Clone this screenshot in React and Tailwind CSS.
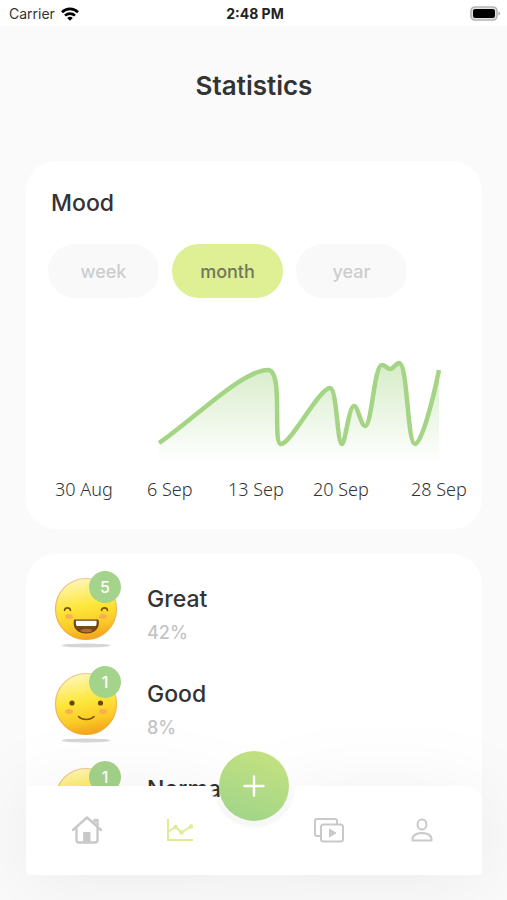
import React from "react";

const PERIODS = ["week", "month", "year"];
const DATES = ["30 Aug", "6 Sep", "13 Sep", "20 Sep", "28 Sep"];
const MOODS = [
  { name: "Great", share: "42%", count: 5, face: "great" },
  { name: "Good", share: "8%", count: 1, face: "good" },
  { name: "Normal", share: "8%", count: 1, face: "good" },
];

const CURVE =
  "M133 93C166 71 216 20 242 20C258 20 246 94 255 94C265 94 293 38 304 38C311 38 311 94 316 94C319 94 323 56 328 56C332 56 335 76 339 76C346 76 348 15 356 15C359 15 361 19 364.5 19C367 19 370 13 373 13C382 13 381 94 389 94C396 94 408 45 413 20";

function StatusBar() {
  return (
    <div className="grid h-[26px] shrink-0 grid-cols-3 items-center bg-white pt-px pr-[6px] pl-[9px] text-sm leading-none">
      <div className="flex items-center gap-[6px] text-[#333]">
        <span>Carrier</span>
        <svg viewBox="0 0 18 14" className="h-[14px] w-[18px]" fill="none" stroke="#000" strokeWidth="2.6">
          <path d="M1 5.2C5.5 .8 12.500 .8 17 5.200" />
          <path d="M4 8.600C6.800 5.900 11.200 5.900 14 8.600" />
          <path d="M9 13.800L6.200 10.900C7.800 9.500 10.200 9.500 11.800 10.900Z" fill="#000" stroke="none" />
        </svg>
      </div>
      <div className="text-center font-bold whitespace-nowrap text-[#222]">2:48 PM</div>
      <svg viewBox="0 0 31 15" className="h-[15px] w-[31px] justify-self-end">
        <rect x="1" y="1" width="26" height="13" rx="4" fill="#e4e4e4" stroke="#b4b4b4" strokeWidth="1.600" />
        <rect x="3" y="3" width="22" height="9" rx="2" fill="#000" />
        <path d="M28.500 5.500C30.500 6 30.500 9 28.500 9.500Z" fill="#aaa" />
      </svg>
    </div>
  );
}

function MoodChart() {
  return (
    <svg viewBox="0 0 456 120" className="block w-full" role="img" aria-label="Mood over the month">
      <defs>
        <linearGradient id="area" x1="0" y1="0" x2="0" y2="1">
          <stop offset="0" stopColor="#a4d585" stopOpacity="0.45" />
          <stop offset="1" stopColor="#a4d585" stopOpacity="0" />
        </linearGradient>
      </defs>
      <path d={CURVE + "V112H133Z"} fill="url(#area)" />
      <path d={CURVE} fill="none" stroke="#a4d585" strokeWidth="4.500" strokeLinejoin="round" />
    </svg>
  );
}

function Face({ kind }) {
  return (
    <svg viewBox="0 0 64 72" className="block h-[72px] w-16" aria-hidden="true">
      <defs>
        <linearGradient id="skin" x1="0.400" y1="0" x2="0.600" y2="1">
          <stop offset="0" stopColor="#fff6b8" />
          <stop offset="0.450" stopColor="#fde73a" />
          <stop offset="0.750" stopColor="#fbcb27" />
          <stop offset="1" stopColor="#f3a01c" />
        </linearGradient>
        <linearGradient id="rim" x1="0" y1="0" x2="0" y2="1">
          <stop offset="0" stopColor="#f0c68c" />
          <stop offset="1" stopColor="#f2a72a" />
        </linearGradient>
      </defs>
      <ellipse cx="32" cy="68.500" rx="24.500" ry="2" fill="#d6d6d6" />
      <circle cx="32" cy="32" r="30.500" fill="url(#skin)" stroke="url(#rim)" strokeWidth="1.200" />
      <ellipse cx="15" cy="39.500" rx="4" ry="2.500" fill="#f9a55a" opacity="0.800" />
      <ellipse cx="49" cy="39.500" rx="4" ry="2.500" fill="#f9a55a" opacity="0.800" />
      {kind === "great" ? (
        <>
          <path d="M10.500 33.500C11 30 16 30 16.500 33.500M47.500 33.500C48 30 53 30 53.500 33.500" fill="none" stroke="#7a5208" strokeWidth="1.600" strokeLinecap="round" />
          <path d="M20.500 43H44C45.500 51.500 40 56 32.200 56C24.500 56 19 51.500 20.500 43Z" fill="#7b4a12" stroke="#6d400c" strokeWidth="1.200" strokeLinejoin="round" />
          <path d="M22 43.800H42.500C42.800 46.800 42.500 48.600 41.500 49H23C22 48.500 21.700 47 22 43.800Z" fill="#fff" />
          <path d="M26 54C29 51 36 51 39 54C35 55.800 30 55.800 26 54Z" fill="#b5702a" />
        </>
      ) : (
        <>
          <circle cx="18" cy="31" r="2.600" fill="#6d450b" />
          <circle cx="46.500" cy="31" r="2.600" fill="#6d450b" />
          <path d="M24.500 44.500C28.500 48.500 36 48.500 40 44.500" fill="none" stroke="#7a5208" strokeWidth="1.600" strokeLinecap="round" />
        </>
      )}
    </svg>
  );
}

function MoodRow({ mood }) {
  return (
    <li className="flex h-[95px] items-start gap-[29px] pl-[28px]">
      <div className="relative pt-[6px]">
        <Face kind={mood.face} />
        <span className="absolute top-0 -right-[3px] flex size-8 items-center justify-center rounded-full bg-[#a4d38b] text-base font-medium text-white">
          {mood.count}
        </span>
      </div>
      <div className="pt-[10px]">
        <div className="text-[23px] leading-9 font-medium text-[#333]">{mood.name}</div>
        <div className="text-lg leading-8 font-medium text-[#c4c4c4]">{mood.share}</div>
      </div>
    </li>
  );
}

function NavBar() {
  return (
    <nav className="absolute right-[25px] bottom-[25px] left-[26px] h-[89px]">
      <div className="absolute inset-0 drop-shadow-[0_4px_36px_rgba(0,0,0,0.06)]">
        <div className="size-full rounded-sm rounded-tr-2xl bg-white [mask-image:radial-gradient(circle_at_50%_0,transparent_40px,black_43px)]" />
      </div>
      <div className="relative grid h-full grid-cols-[1fr_1fr_56px_1fr_1fr] px-[14px] text-[#c9c9c9]">
        <button aria-label="Home" className="flex items-center justify-center">
          <svg viewBox="0 0 32 30" className="h-[30px] w-8" fill="none" stroke="currentColor" strokeWidth="2.400" strokeLinecap="round" strokeLinejoin="round">
            <path d="M2 14L16 1.500L30 14" />
            <path d="M23.500 7V4H26.500V10" />
            <path d="M5.500 12.500V24Q5.500 26.500 8 26.500H24Q26.500 26.500 26.500 24V12.500" />
            <path d="M13 16.500H19V26H13Z" fill="currentColor" strokeWidth="1" />
          </svg>
        </button>
        <button aria-label="Statistics" aria-current="page" className="flex items-center justify-center text-[#dcee8f]">
          <svg viewBox="0 0 28 26" className="h-[26px] w-7" fill="none" stroke="currentColor" strokeWidth="2">
            <path d="M2 1V22H27" />
            <path d="M2 14L9.500 9L15.500 14.500L25 8.500" />
            <circle cx="9.500" cy="9" r="1.200" fill="currentColor" />
            <circle cx="15.500" cy="14.500" r="1.200" fill="currentColor" />
            <circle cx="25" cy="8.500" r="1.200" fill="currentColor" />
          </svg>
        </button>
        <span />
        <button aria-label="Videos" className="flex items-center justify-center">
          <svg viewBox="0 0 32 26" className="h-[26px] w-8" fill="none" stroke="currentColor" strokeWidth="2" strokeLinejoin="round">
            <path d="M7 18H4Q2 18 2 16V3Q2 1 4 1H22Q24 1 24 3V6" />
            <rect x="8" y="6.500" width="22" height="17" rx="2.500" />
            <path d="M16.500 11L23 15L16.500 19Z" fill="currentColor" strokeWidth="1" />
          </svg>
        </button>
        <button aria-label="Profile" className="flex items-center justify-center">
          <svg viewBox="0 0 24 26" className="h-[26px] w-6" fill="none" stroke="currentColor" strokeWidth="2" strokeLinejoin="round">
            <ellipse cx="12" cy="6.500" rx="4.500" ry="5" />
            <path d="M2.500 22.500C2 17.500 6 15 12 15C18 15 22 17.500 21.500 22.500Z" />
          </svg>
        </button>
      </div>
      <button
        aria-label="Add mood"
        className="absolute -top-[35px] left-1/2 flex size-[70px] -translate-x-1/2 items-center justify-center rounded-full bg-linear-200 from-[#c8e27f] to-[#9dd489]"
      >
        <svg viewBox="0 0 22 22" className="size-[22px]" stroke="#fff" strokeWidth="2.400" strokeLinecap="round">
          <path d="M11 1.500V20.500M1.500 11H20.500" />
        </svg>
      </button>
    </nav>
  );
}

export default function App() {
  return (
    <div className="relative flex h-screen flex-col overflow-hidden bg-[#fafafa] font-['Inter','Liberation_Sans',sans-serif]">
      <StatusBar />
      <main className="mb-[25px] min-h-0 flex-1 overflow-hidden pr-[25px] pl-[26px]">
        <h1 className="pt-11 pb-[59px] text-center text-[26px] leading-8 font-semibold text-[#333]">Statistics</h1>
        <section className="rounded-[30px] bg-white pb-[27px]">
          <h2 className="pt-[26px] pl-[25px] text-[23px] leading-8 font-medium text-[#333]">Mood</h2>
          <div className="flex gap-[13px] pt-[25px] pl-[22px]">
            {PERIODS.map((period) => (
              <button
                key={period}
                aria-pressed={period === "month"}
                className={
                  period === "month"
                    ? "h-[54px] w-[111px] rounded-full bg-[#deef94] pt-px text-lg font-medium text-[#70775c]"
                    : "h-[54px] w-[111px] rounded-full bg-[#f9f9f9] pt-px text-lg font-medium text-[#cdcdcd]"
                }
              >
                {period}
              </button>
            ))}
          </div>
          <div className="pt-[52px]">
            <MoodChart />
          </div>
          <div className="grid grid-cols-[92fr_81fr_85fr_98fr_57fr] pt-[6px] pr-[14px] pl-[29px] font-['Noto_Sans','Open_Sans',sans-serif] text-lg leading-[26px] font-light text-[#333]">
            {DATES.map((date) => (
              <span key={date} className="whitespace-nowrap">{date}</span>
            ))}
          </div>
        </section>
        <section className="mt-[25px] rounded-t-[30px] bg-white pt-[17px]">
          <ul>
            {MOODS.map((mood) => (
              <MoodRow key={mood.name} mood={mood} />
            ))}
          </ul>
        </section>
      </main>
      <NavBar />
    </div>
  );
}
